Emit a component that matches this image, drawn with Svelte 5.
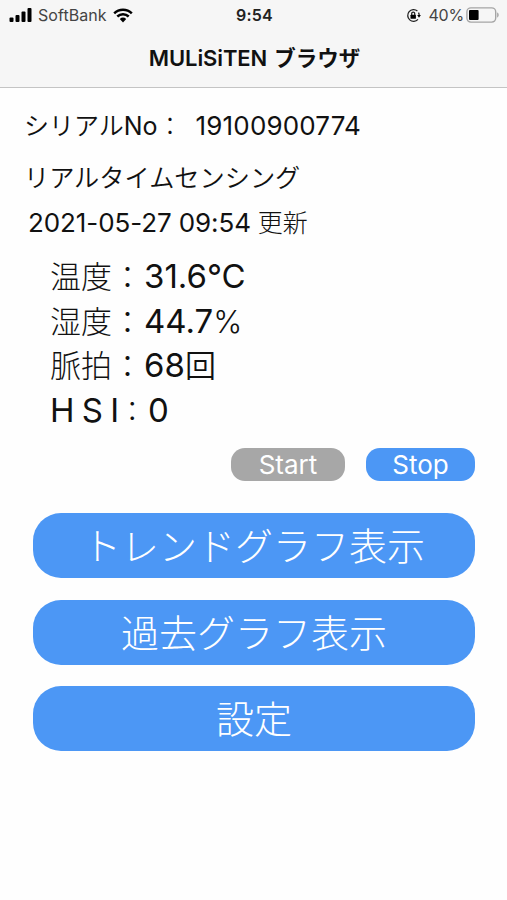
<script lang="ts">
	interface Reading {
		label: string;
		value: string;
		unit?: string;
		kind: string;
	}

	const serial = '19100900774';
	const updatedAt = '2021-05-27 09:54';

	const readings: Reading[] = [
		{ label: '温度', value: '31.6°C', kind: 'temp' },
		{ label: '湿度', value: '44.7', unit: '%', kind: 'humidity' },
		{ label: '脈拍', value: '68', unit: '回', kind: 'pulse' },
		{ label: 'H S I', value: '0', kind: 'hsi' }
	];

	const actions = ['トレンドグラフ表示', '過去グラフ表示', '設定'];

	let running = $state(true);
</script>

<div class="screen">
	<header>
		<div class="statusbar">
			<div class="carrier">
				<svg class="signal" width="24" height="16" viewBox="0 0 24 16">
					<rect x="0.5" y="10.5" width="4" height="4.5" rx="1" />
					<rect x="6.5" y="8" width="4" height="7" rx="1" />
					<rect x="12.5" y="4.5" width="4" height="10.5" rx="1" />
					<rect x="18.5" y="1" width="4" height="14" rx="1" />
				</svg>
				<span class="carrier-name">SoftBank</span>
				<svg class="wifi" width="20" height="15" viewBox="0 0 20 15">
					<path d="M1.2 5.3a12.6 12.6 0 0 1 17.6 0" />
					<path d="M4.3 8.5a8.2 8.2 0 0 1 11.4 0" />
					<path class="fill" d="M6.8 11a4.7 4.7 0 0 1 6.4 0L10 14.4z" />
				</svg>
			</div>
			<span class="clock">9:54</span>
			<div class="power">
				<svg class="lock" width="15" height="15" viewBox="0 0 15 15">
					<path class="ring" d="M11.4 2.9A5.9 5.9 0 1 0 12 11.4" />
					<path class="ring" d="M12.5 4.6a5.9 5.9 0 0 1 .7 2.9" />
					<path d="M11.2 7h3.7L13 9.8z" />
					<rect x="4.5" y="6.8" width="5.4" height="4" rx="0.5" />
					<path class="ring" d="M5.7 7V5.6a1.5 1.5 0 0 1 3 0V7" />
				</svg>
				<span class="percent">40%</span>
				<svg class="battery" width="34" height="17" viewBox="0 0 34 17">
					<rect class="shell" x="0.9" y="0.9" width="28.8" height="14.2" rx="4" />
					<rect x="3" y="3.1" width="9.6" height="9.8" rx="1" />
					<path class="tip" d="M31.1 5.5v5c1-.3 1.6-1.2 1.6-2.5s-.6-2.2-1.6-2.5z" />
				</svg>
			</div>
		</div>
		<h1><span class="brand">MULiSiTEN</span><span class="title-ja">ブラウザ</span></h1>
	</header>

	<main>
		<p class="serial">
			<span class="kana">シリアル</span><span class="no">No</span><span class="colon">：</span>
			<span class="serial-value">{serial}</span>
		</p>
		<p class="sensing">リアルタイムセンシング</p>
		<p class="updated"><span class="date">{updatedAt}</span><span class="kanji">更新</span></p>

		<dl class="readings">
			{#each readings as reading}
				<div class="reading {reading.kind}">
					<dt><span class="label">{reading.label}</span><span class="mark">：</span></dt>
					<dd>{reading.value}{#if reading.unit}<span class="unit">{reading.unit}</span>{/if}</dd>
				</div>
			{/each}
		</dl>

		<div class="controls">
			<button class="start" disabled={running} onclick={() => (running = true)}>Start</button>
			<button class="stop" disabled={!running} onclick={() => (running = false)}>Stop</button>
		</div>

		<nav>
			{#each actions as action}
				<button>{action}</button>
			{/each}
		</nav>
	</main>
</div>

<style>
	:global(body) {
		margin: 0;
		background: #fff;
	}

	.screen {
		width: 507px;
		height: 900px;
		overflow: hidden;
		background: #fefefe;
		color: #111;
		font-family: Inter, 'Noto Sans CJK JP', sans-serif;
		white-space: nowrap;
	}

	header {
		box-sizing: border-box;
		height: 88px;
		background: #f6f6f6;
		border-bottom: 1px solid #c4c4c4;
	}

	.statusbar {
		display: grid;
		grid-template-columns: 1fr auto 1fr;
		align-items: center;
		height: 30px;
		padding: 0 7px 0 9px;
		font-size: 16px;
	}

	.carrier,
	.power {
		display: flex;
		align-items: center;
	}

	.carrier-name {
		margin-left: 5px;
		color: #444;
		font-size: 16px;
		letter-spacing: 0.05px;
	}

	.wifi {
		margin-left: 6px;
		fill: none;
		stroke: #000;
		stroke-width: 2.5;
	}

	.wifi .fill {
		fill: #000;
		stroke: none;
	}

	.clock {
		color: #222;
		font-weight: 600;
		letter-spacing: 0.2px;
	}

	.power {
		justify-content: flex-end;
	}

	.lock .ring {
		fill: none;
		stroke: #222;
		stroke-width: 1.3;
	}

	.percent {
		margin: 0 2px 0 7px;
		color: #444;
		letter-spacing: -0.2px;
	}

	.battery .shell {
		fill: none;
		stroke: #a5a5a5;
		stroke-width: 1.4;
	}

	.battery .tip {
		fill: #a5a5a5;
	}

	h1 {
		display: flex;
		justify-content: center;
		gap: 7px;
		margin: 0;
		padding: 12px 0 0 2px;
		font-size: 22px;
		font-weight: 600;
		line-height: 32px;
	}

	.brand {
		letter-spacing: -0.1px;
	}

	.title-ja {
		font-size: 21.5px;
	}

	p {
		display: flex;
		align-items: baseline;
		margin: 0;
		font-size: 25px;
	}

	main {
		padding-top: 19px;
	}

	.serial {
		height: 36px;
		padding-left: 24px;
		line-height: 37px;
	}

	.serial-value {
		margin-left: 13px;
		font-size: 26px;
		letter-spacing: 0.15px;
	}

	.sensing {
		height: 36px;
		margin-top: 17px;
		padding-left: 24px;
		font-size: 25.2px;
		line-height: 36px;
	}

	.updated {
		height: 36px;
		margin-top: 8px;
		padding-left: 28px;
		line-height: 37px;
	}

	.date {
		font-size: 26px;
		letter-spacing: -0.1px;
	}

	.kanji {
		margin-left: 7px;
	}

	.kanji,
	.colon {
		font-weight: 300;
	}

	.kana,
	.sensing {
		font-weight: 350;
	}

	.readings {
		margin: 14px 0 0;
		padding-left: 50px;
	}

	.reading {
		display: flex;
		align-items: baseline;
		height: 44.5px;
		font-size: 33px;
		line-height: 44.5px;
	}

	dt {
		width: 94px;
		font-size: 31px;
		font-weight: 300;
	}

	dd {
		margin: 0;
	}

	.unit {
		font-size: 31px;
		font-weight: 350;
	}

	.humidity .unit {
		font-size: 31px;
		font-weight: 300;
	}

	.hsi dt {
		display: flex;
		align-items: baseline;
		width: 98px;
	}

	.hsi .label {
		font-size: 33px;
		font-weight: 400;
		word-spacing: -2px;
	}

	.hsi .mark {
		margin-left: -1px;
		font-size: 28px;
	}

	button {
		padding: 0;
		border: 0;
		background: #4c97f5;
		color: #fff;
		font-family: inherit;
	}

	.controls {
		display: flex;
		justify-content: flex-end;
		gap: 21px;
		margin-top: 16px;
		padding-right: 32px;
	}

	.controls button {
		height: 33px;
		border-radius: 14px;
		font-size: 26px;
		line-height: 33px;
	}

	.controls .start {
		width: 114px;
		background: #a7a7a7;
	}

	.controls .stop {
		width: 109px;
	}

	nav {
		display: grid;
		gap: 21.5px;
		margin-top: 32px;
		padding: 0 32px 0 33px;
	}

	nav button {
		height: 65px;
		padding-top: 1px;
		border-radius: 28px;
		font-size: 38px;
		font-weight: 300;
		line-height: 64px;
	}
</style>
